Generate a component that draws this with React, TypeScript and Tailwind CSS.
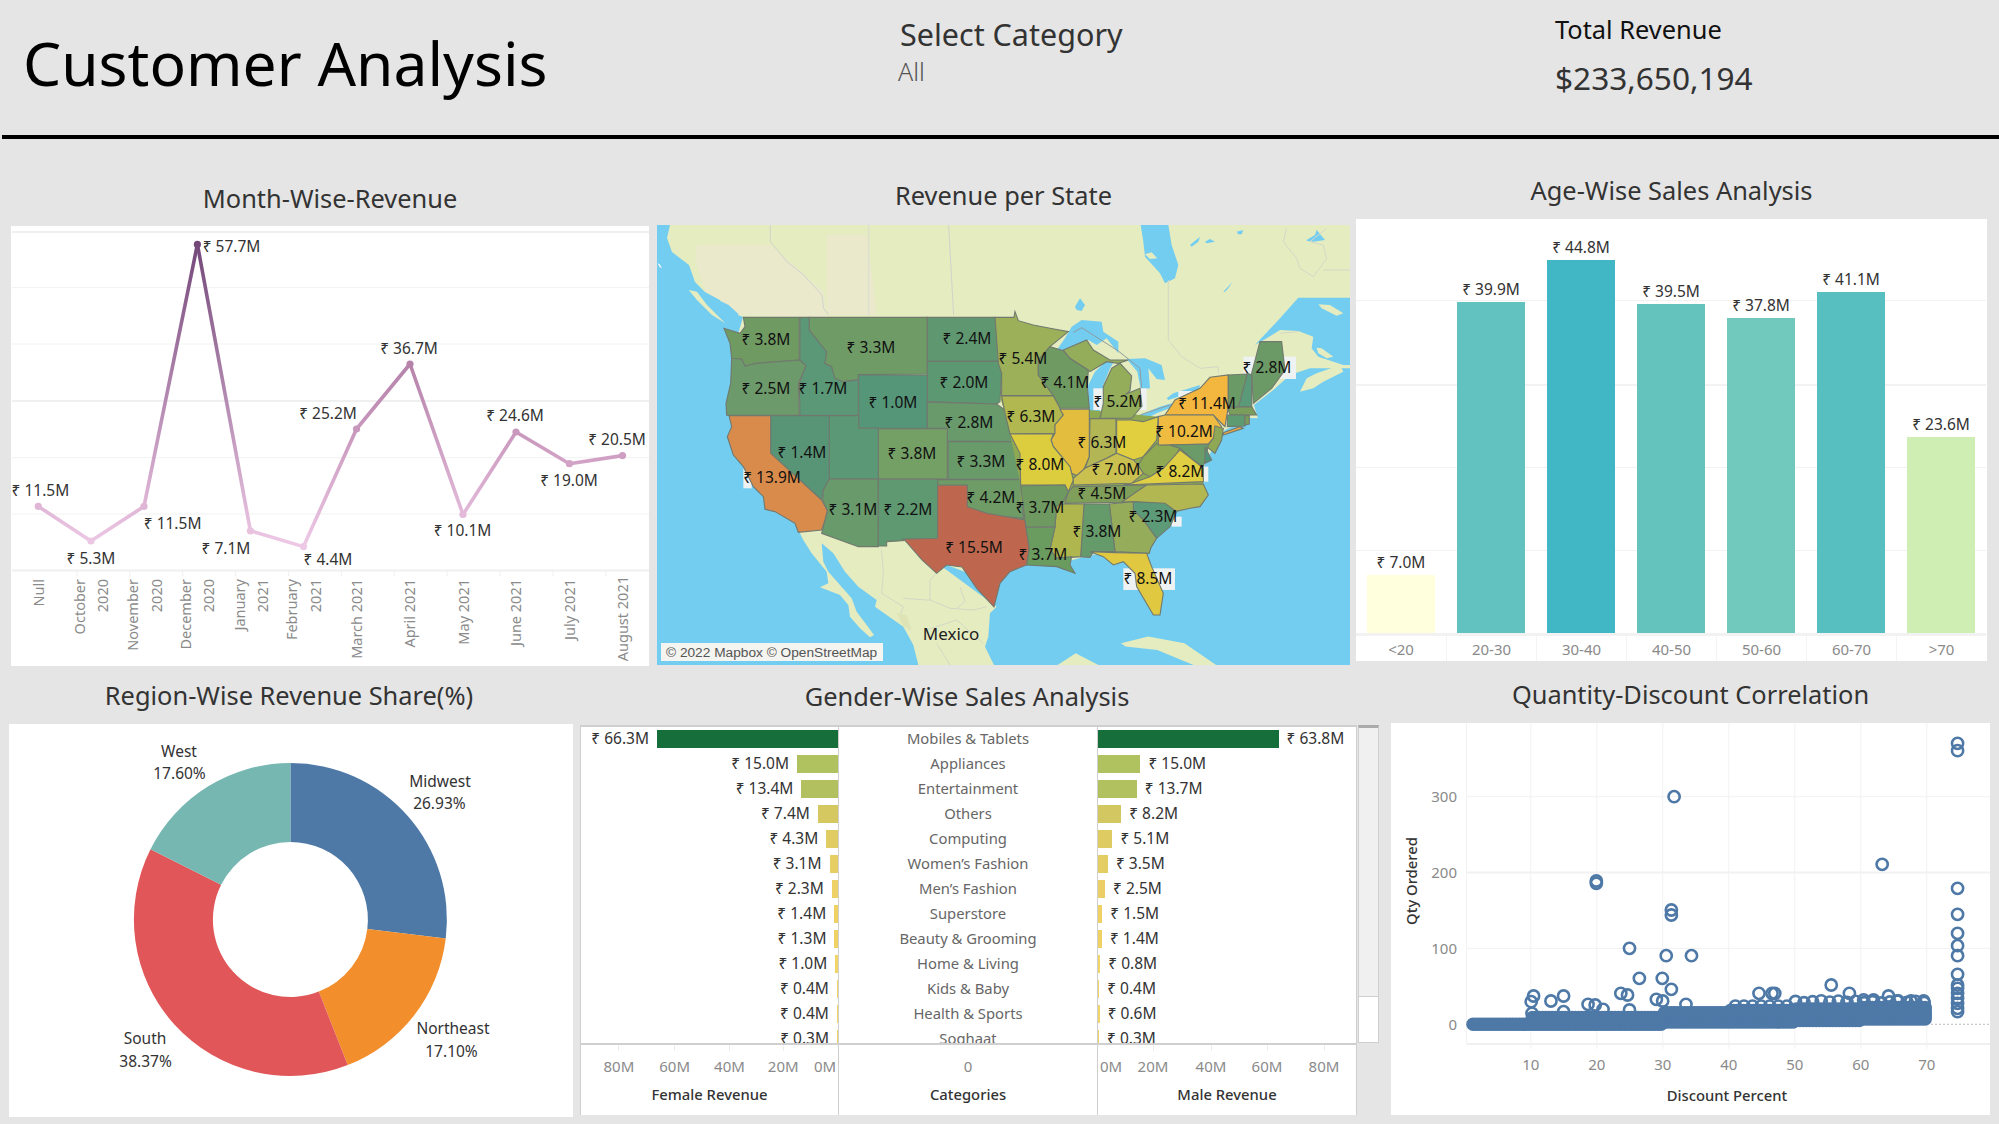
// App.tsx - Customer Analysis dashboard
const FONT = "font-['Noto_Sans',sans-serif]";

// ---------- line chart ----------
const months = [
  { x: 38.3, y: 506.4, v: 11.5, label: "₹ 11.5M", lx: 40.4, ly: 490.6 },
  { x: 90.9, y: 541, v: 5.3, label: "₹ 5.3M", lx: 91, ly: 558.5 },
  { x: 144, y: 506.4, v: 11.5, label: "₹ 11.5M", lx: 172.6, ly: 523.5 },
  { x: 197.4, y: 244.4, v: 57.7, label: "₹ 57.7M", lx: 231.5, ly: 246.5 },
  { x: 250.4, y: 530.8, v: 7.1, label: "₹ 7.1M", lx: 226, ly: 548.7 },
  { x: 303.5, y: 546.6, v: 4.4, label: "₹ 4.4M", lx: 328, ly: 560 },
  { x: 356.5, y: 429, v: 25.2, label: "₹ 25.2M", lx: 328, ly: 414 },
  { x: 410, y: 364, v: 36.7, label: "₹ 36.7M", lx: 409, ly: 349 },
  { x: 463, y: 514.5, v: 10.1, label: "₹ 10.1M", lx: 462.5, ly: 531 },
  { x: 516, y: 432, v: 24.6, label: "₹ 24.6M", lx: 515, ly: 416 },
  { x: 569.4, y: 463.7, v: 19.0, label: "₹ 19.0M", lx: 569, ly: 481 },
  { x: 622.5, y: 455.6, v: 20.5, label: "₹ 20.5M", lx: 617, ly: 440 },
];

const axisMonths = [
  { x: 39, text: "Null" },
  { x: 80, text: "October" },
  { x: 103, text: "2020" },
  { x: 133, text: "November" },
  { x: 157, text: "2020" },
  { x: 186, text: "December" },
  { x: 209, text: "2020" },
  { x: 240, text: "January" },
  { x: 263, text: "2021" },
  { x: 292, text: "February" },
  { x: 316, text: "2021" },
  { x: 357, text: "March 2021" },
  { x: 410, text: "April 2021" },
  { x: 464, text: "May 2021" },
  { x: 516, text: "June 2021" },
  { x: 570, text: "July 2021" },
  { x: 623, text: "August 2021" },
];

const lineStops: [number, number[]][] = [
  [4.4, [238, 201, 230]],
  [20, [208, 160, 196]],
  [37, [182, 129, 170]],
  [57.7, [116, 73, 122]],
];

function lineColor(v: number) {
  for (let i = 0; i < lineStops.length - 1; i++) {
    const [a, ca] = lineStops[i];
    const [b, cb] = lineStops[i + 1];
    if (v <= b) {
      const t = Math.max(0, (v - a) / (b - a));
      return `rgb(${ca.map((c, k) => Math.round(c + (cb[k] - c) * t)).join(",")})`;
    }
  }
  return "rgb(116,73,122)";
}

function LineChart() {
  return (
    <svg viewBox="11 226 638 440" className="block w-[638px] h-[440px]">
      <defs>
        {months.slice(1).map((m, i) => (
          <linearGradient
            key={i}
            id={`seg${i}`}
            gradientUnits="userSpaceOnUse"
            x1={months[i].x}
            y1={months[i].y}
            x2={m.x}
            y2={m.y + 0.01}
          >
            <stop offset="0" stopColor={lineColor(months[i].v)} />
            <stop offset="1" stopColor={lineColor(m.v)} />
          </linearGradient>
        ))}
      </defs>
      {[287.6, 344, 457.7, 514].map((y) => (
        <line key={y} x1="12" x2="649" y1={y} y2={y} stroke="#f2f2f2" />
      ))}
      {[232, 401, 570.5].map((y) => (
        <line key={y} x1="12" x2="649" y1={y} y2={y} stroke="#f0f0f0" strokeWidth="2" />
      ))}
      {months.map((m, i) => (
        <line
          key={i}
          x1={12 + 52.9 * i + 12}
          x2={12 + 52.9 * i + 12}
          y1="571"
          y2="576"
          stroke={i === 0 ? "none" : "#f0f0f0"}
        />
      ))}
      {months.slice(1).map((m, i) => (
        <line
          key={i}
          x1={months[i].x}
          y1={months[i].y}
          x2={m.x}
          y2={m.y + 0.01}
          stroke={`url(#seg${i})`}
          strokeWidth="3.6"
          strokeLinecap="round"
        />
      ))}
      {months.map((m, i) => (
        <circle key={i} cx={m.x} cy={m.y} r="3.6" fill={lineColor(m.v)} />
      ))}
      {months.map((m, i) => (
        <text key={i} x={m.lx} y={m.ly} dy=".35em" textAnchor="middle" fontSize="15.5" fill="#333">
          {m.label}
        </text>
      ))}
      {axisMonths.map((a) => (
        <text
          key={a.x}
          transform={`translate(${a.x} ${a.x === 623 ? 576 : 579}) rotate(-90)`}
          dy=".35em"
          textAnchor="end"
          fontSize="14.5"
          fill="#8a8a8a"
        >
          {a.text}
        </text>
      ))}
    </svg>
  );
}

// ---------- map ----------
const westStates = [
  ["#6f9a62", "100,52 268,52 268,180 140,190 105,198 95,178 65,175 60,130 42,85 90,100 105,80"],
  ["#6c9a6a", "65,175 95,178 105,198 140,190 268,180 288,197 265,250 268,346 50,346 48,310 62,250"],
  ["#5a9878", "270,52 298,52 298,90 350,155 345,190 365,200 375,235 400,245 445,240 445,346 270,346 268,250 288,197 270,180"],
  ["#6f9c66", "298,52 652,52 652,222 445,224 445,238 400,245 375,235 365,200 345,190 350,155 298,90"],
  ["#5f9870", "652,52 855,52 868,184 652,184"],
  ["#5c9872", "652,184 868,184 875,220 870,305 860,312 652,305"],
  ["#559679", "446,225 652,225 652,385 446,385"],
  ["#689a6c", "652,307 860,312 885,330 900,400 915,425 712,423 712,385 652,385"],
  ["#74a066", "505,386 712,386 712,537 505,537"],
  ["#689a6a", "714,425 918,425 932,470 935,538 714,537"],
  ["#6f9c66", "683,539 935,539 940,655 880,650 830,640 790,630 772,620 772,556 683,556"],
  ["#5b9875", "358,347 446,347 446,385 505,385 505,537 358,537"],
  ["#589577", "182,347 358,347 358,537 340,570 335,600 182,460"],
  ["#689a6b", "358,538 505,538 505,740 445,740 335,700 345,660 352,632 338,600 340,570"],
  ["#5f9971", "505,538 683,538 683,715 578,718 582,722 530,725 530,738 505,738"],
  ["#d98b4c", "57,347 182,347 182,460 335,600 352,632 345,660 335,690 265,697 255,670 195,635 165,628 160,590 130,560 100,500 70,465 52,410 65,380"],
  ["#bf674e", "683,556 772,556 772,620 830,640 945,660 958,745 950,795 900,815 870,850 852,921 800,865 756,801 710,795 680,820 636,780 582,718 683,715"],
];

const eastStates = [
  ["#9cb05a", "15,52 72,52 75,35 85,62 130,75 180,85 235,95 180,140 145,180 145,225 195,287 35,287 35,220 25,190"],
  ["#6f9a62", "145,180 180,140 220,152 240,175 295,210 292,260 298,325 210,325 190,287 145,225"],
  ["#93ad5b", "220,150 290,120 310,150 360,180 415,180 385,190 350,185 300,215 295,210 240,175"],
  ["#93ad5b", "365,205 390,190 425,228 420,272 407,283 450,265 456,318 425,355 330,355 340,310 340,260"],
  ["#b0b84f", "35,288 190,288 210,325 220,345 195,375 195,400 60,402 45,340"],
  ["#e3bd3d", "210,328 298,328 298,470 285,500 270,530 245,520 240,500 190,440 183,420 195,400 195,375 220,345"],
  ["#b2b655", "300,356 378,356 378,460 350,475 285,505 298,470"],
  ["#e1cf40", "380,360 425,360 460,365 505,350 500,420 460,470 430,480 380,460"],
  ["#dccd3f", "60,402 190,402 183,420 190,440 240,500 250,540 235,575 225,555 92,555 90,460"],
  ["#c9c050", "285,505 350,475 380,460 430,480 445,495 460,520 425,550 250,555 250,535"],
  ["#8fa852", "445,495 460,470 500,430 510,435 540,435 570,445 555,470 520,505 480,530 460,520"],
  ["#e0cf42", "425,550 480,530 520,505 570,450 610,480 640,505 640,545 400,555"],
  ["#7f9f5a", "235,575 250,560 470,555 445,572 395,607 225,610"],
  ["#b3b752", "395,607 445,572 470,555 640,552 655,585 630,620 600,625 555,635 525,615 430,605"],
  ["#5d9a78", "430,605 525,610 560,635 540,680 500,715 460,660 430,630"],
  ["#95ad5b", "358,612 430,605 430,630 460,660 500,715 482,745 478,760 375,755"],
  ["#659a6a", "282,612 358,612 375,755 310,755 300,772 272,770"],
  ["#b0b64e", "200,612 282,612 272,770 200,775 180,748 195,680"],
  ["#6e9a62", "92,558 225,555 235,575 220,605 200,620 195,680 108,682"],
  ["#6a9b5f", "108,682 195,682 180,748 200,775 245,770 240,795 255,820 200,800 110,795 118,745"],
  ["#e0c840", "300,755 375,758 470,760 485,800 520,880 510,945 490,945 440,860 435,820 400,785 370,795 340,770"],
  ["#f3b63e", "525,345 555,300 630,265 660,232 715,225 715,320 705,380 700,375 670,345"],
  ["#efbb41", "505,350 525,345 670,345 695,380 670,415 655,432 505,435"],
  ["#8ea855", "675,378 700,385 695,420 675,460 650,440 670,415"],
  ["#6a9b68", "540,435 655,432 650,460 640,500 610,480 570,445"],
  ["#4f9378", "645,440 665,480 645,490"],
  ["#5a9a78", "745,322 772,220 785,225 785,320"],
  ["#6a9a66", "715,225 772,222 745,322 715,320"],
  ["#6c9a66", "785,220 810,125 875,125 885,210 845,265 790,310"],
  ["#7a9d5c", "712,322 785,320 800,345 720,345"],
  ["#5f9b70", "712,345 765,345 765,378 712,380"],
  ["#7a9d5c", "765,347 778,347 778,372 765,375"],
  ["#f0a93f", "700,398 750,380 760,385 700,405"],
];

const mapLabels: [string, number, number][] = [
  ["₹ 3.8M", 766, 340], ["₹ 3.3M", 871, 348], ["₹ 2.4M", 967, 339], ["₹ 2.5M", 766, 389],
  ["₹ 1.7M", 823, 389], ["₹ 1.0M", 893, 403], ["₹ 2.0M", 964, 383], ["₹ 2.8M", 969, 423],
  ["₹ 3.8M", 912, 454], ["₹ 3.3M", 981, 462], ["₹ 1.4M", 802, 453], ["₹ 13.9M", 772, 478],
  ["₹ 3.1M", 853, 510], ["₹ 2.2M", 908, 510], ["₹ 15.5M", 974, 548], ["₹ 4.2M", 991, 498],
  ["₹ 5.4M", 1023, 359], ["₹ 4.1M", 1065, 383], ["₹ 5.2M", 1118, 402], ["₹ 11.4M", 1207, 404],
  ["₹ 6.3M", 1031, 417], ["₹ 6.3M", 1102, 443], ["₹ 10.2M", 1184, 432], ["₹ 8.0M", 1040, 465],
  ["₹ 7.0M", 1116, 470], ["₹ 8.2M", 1180, 472], ["₹ 4.5M", 1102, 494], ["₹ 3.7M", 1040, 508],
  ["₹ 2.3M", 1153, 517], ["₹ 3.8M", 1097, 532], ["₹ 3.7M", 1043, 555], ["₹ 8.5M", 1148, 579],
  ["₹ 2.8M", 1267, 368],
];

const WATER = "#73cdf0";
const LAND = "#e5ecc0";

function UsMap() {
  return (
    <svg viewBox="657 225 693 440" className="block w-[693px] h-[440px]">
      <rect x="657" y="225" width="693" height="440" fill={WATER} />
      {/* main land mass, the part under the states is hidden by them */}
      <polygon
        fill={LAND}
        points="670,225 1350,225 1350,420 1250,418 1225,430 1215,445 1205,462 1201,490 1195,503 1172,512 1165,525 1155,537 1148,552 1120,553 1090,555 1062,563 1025,560 985,580 960,570 920,555 900,545 858,545 800,530 775,480 745,420 735,345 743,317 725,310 720,300 705,292 695,282 689,265 672,252 667,238"
      />
      {/* north west */}
      <g transform="translate(657 225) scale(0.3333)">
        <polygon fill="#eae9cc" points="120,60 340,60 500,200 510,275 240,270 190,225 145,200 115,110" />
        <polygon fill="#eae9cc" points="510,30 630,30 660,270 510,270" />
        <polygon fill={LAND} points="95,195 120,200 150,240 205,295 165,270 120,225" />
        <polygon fill={WATER} points="190,228 215,240 245,268 235,275 200,255" />
        <polygon fill="#ffffff" points="2,115 8,118 15,130 8,126" />
        <g fill="none" stroke="#cfd3cb" strokeWidth="3">
          <polyline points="340,0 340,50 390,110 440,150 495,210 500,250 515,270" />
          <polyline points="875,0 890,270" />
        </g>
        <polyline fill="none" stroke="#dfe0cd" strokeWidth="5" points="635,0 635,270" />
      </g>
      {/* Mexico */}
      <g transform="translate(770 530) scale(0.3333)">
        <polygon
          fill={LAND}
          points="85,0 400,25 680,230 660,250 655,320 645,350 672,405 445,405 430,345 400,290 315,230 320,210 265,170 225,125 190,70 155,40 160,95 175,125 210,165 245,205 260,245 290,285 312,315 300,322 270,295 240,260 235,225 210,195 150,172 175,160 170,125 125,70 100,30"
        />
        <g fill="none" stroke="#cfd4c6" strokeWidth="2.5">
          <polyline points="335,60 340,130 335,190 400,230 390,260 420,300" />
          <polyline points="500,130 480,150 480,210 540,235 610,240 650,230" />
          <polyline points="400,205 470,210 480,210" />
          <polyline points="470,300 560,270 640,340" />
          <polyline points="570,170 585,215 560,235" />
          <polyline points="500,340 540,405" />
        </g>
        <polygon fill="#dfe4b6" points="380,250 410,255 425,300 400,290" />
      </g>
      {/* islands to the south east */}
      <g transform="translate(650 170) scale(0.4529 0.3333)">
        <polygon fill={LAND} points="1040,1420 1100,1400 1180,1420 1250,1485 1200,1485 1120,1440 1050,1430" />
        <polygon fill={LAND} points="900,1485 940,1450 990,1485" />
      </g>
      {/* Canada, lakes, gulf */}
      <g transform="translate(1050 225) scale(0.3333)">
        <g fill={WATER}>
          <polygon points="272,0 355,0 365,60 385,120 375,160 345,175 330,145 285,95 280,50" />
          <polygon points="420,60 450,35 445,50 425,65" />
          <polygon points="465,50 480,42 495,50 470,55" />
          <polygon points="560,20 580,15 575,28 565,28" />
          <polygon points="770,45 795,30 800,15 825,45 790,50 772,48" />
          <polygon points="520,200 548,170 535,190 525,200" />
          <polygon points="75,245 90,220 105,240 95,258 80,255" />
          {/* gulf of st lawrence and the atlantic */}
          <polygon points="900,218 745,218 690,280 615,360 650,340 690,315 745,318 790,335 785,370 805,395 880,420 900,420" />
          <polygon points="900,430 780,430 720,450 670,495 612,540 625,585 900,585" />
          {/* great lakes */}
          <polygon points="65,305 95,285 155,290 160,320 205,350 205,385 170,340 140,360 115,345 90,355 55,375 20,375 45,340" />
          <polygon points="230,402 285,400 335,420 345,465 320,462 295,430 300,490 272,492 262,440" />
          <polygon points="165,412 195,405 180,430 160,480 150,535 150,575 125,585 110,540 115,480 135,440" />
          <polygon points="245,580 270,570 330,545 365,535 370,545 320,565 270,590" />
          <polygon points="350,520 370,505 450,480 445,500 385,515 355,525" />
        </g>
        <polygon fill={LAND} points="285,88 305,82 322,100 300,102" />
        <polygon fill={LAND} points="805,238 840,240 880,265 860,272 815,250" />
        <polygon fill={LAND} points="800,368 815,370 850,395 830,400 805,385" />
        <polygon fill={LAND} points="750,500 770,460 800,445 870,420 880,440 820,470 790,490" />
        <g fill="none" stroke="#d3d8c6" strokeWidth="3">
          <polyline points="355,165 355,345 395,395 450,430 505,425 505,445" />
          <polyline points="710,10 700,50 740,100 750,130 790,155 830,100 820,60 780,50 830,10" />
          <polyline points="820,135 900,135" />
          <polyline points="690,325 745,320" />
        </g>
        <polyline fill="none" stroke="#8f9ba0" strokeWidth="3" points="70,322 95,308 205,378 270,430 275,490" />
        <polyline fill="none" stroke="#8f9ba0" strokeWidth="3" points="250,580 275,568 360,540" />
        <g fill="#eef2f2">
          <rect x="130" y="490" width="28" height="65" />
          <rect x="262" y="490" width="28" height="65" />
          <rect x="580" y="395" width="158" height="67" />
          <rect x="385" y="498" width="65" height="20" />
        </g>
      </g>
      {/* label halos on the water */}
      <g transform="translate(990 300) scale(0.3333)" fill="#eef2f2">
        <rect x="400" y="805" width="155" height="65" />
        <rect x="545" y="650" width="30" height="30" />
        <rect x="630" y="500" width="25" height="45" />
      </g>
      <g transform="translate(710 300) scale(0.3333)">
        <rect x="100" y="505" width="25" height="60" fill="#eef2f2" />
        {/* seam between the two halves of the country */}
        <polygon fill="#689a6a" points="880,420 945,420 945,660 880,650" />
        {westStates.map(([fill, pts], i) => (
          <polygon key={i} fill={fill} points={pts} stroke="#71796f" strokeWidth="1.1" vectorEffect="non-scaling-stroke" />
        ))}
      </g>
      <g transform="translate(990 300) scale(0.3333)">
        <polygon
          fill="#8fa852"
          points="30,290 45,340 60,402 92,555 92,610 200,612 225,610 400,607 525,610 640,550 640,505 640,440 670,415 505,350 298,330 210,328 190,288"
        />
        {eastStates.map(([fill, pts], i) => (
          <polygon key={i} fill={fill} points={pts} stroke="#71796f" strokeWidth="1.1" vectorEffect="non-scaling-stroke" />
        ))}
      </g>
      {mapLabels.map(([t, x, y], i) => (
        <text key={i} x={x} y={y} dy=".35em" textAnchor="middle" fontSize="15.5" fill="#111">
          {t}
        </text>
      ))}
      <text x="951" y="634" dy=".35em" textAnchor="middle" fontSize="17" fill="#222">
        Mexico
      </text>
      <rect x="661" y="643" width="222" height="18" fill="#f4f4f0" />
      <text x="666" y="657" fontSize="13.7" fill="#555" fontFamily="'Liberation Sans', sans-serif">
        © 2022 Mapbox © OpenStreetMap
      </text>
    </svg>
  );
}

// ---------- age bars ----------
const ageBars = [
  { name: "<20", value: "₹ 7.0M", h: 58, color: "bg-[#ffffdd]" },
  { name: "20-30", value: "₹ 39.9M", h: 331, color: "bg-[#61c2bf]" },
  { name: "30-40", value: "₹ 44.8M", h: 373, color: "bg-[#41b6c4]" },
  { name: "40-50", value: "₹ 39.5M", h: 329, color: "bg-[#65c3bd]" },
  { name: "50-60", value: "₹ 37.8M", h: 315, color: "bg-[#71c8bc]" },
  { name: "60-70", value: "₹ 41.1M", h: 341, color: "bg-[#57bfbf]" },
  { name: ">70", value: "₹ 23.6M", h: 196, color: "bg-[#cfeeb3]" },
];

function AgeChart() {
  return (
    <div className="w-[631px] h-[442px] bg-white">
      <div className="relative h-[414px] w-[630px]">
        <div className="absolute inset-x-0 top-[81px] h-px bg-[#f2f2f2]" />
        <div className="absolute inset-x-0 top-[165px] h-[2px] bg-[#f2f2f2]" />
        <div className="absolute inset-x-0 top-[248px] h-px bg-[#f2f2f2]" />
        <div className="absolute inset-x-0 top-[331px] h-px bg-[#f2f2f2]" />
        <div className="relative grid grid-cols-7 h-full">
          {ageBars.map((b) => (
            <div key={b.name} className="flex flex-col justify-end items-center">
              <span className="text-[15.5px] leading-5 mb-[3px] text-[#333]">{b.value}</span>
              <div className={`w-[68px] ${b.color}`} style={{ height: b.h }} />
            </div>
          ))}
        </div>
      </div>
      <div className="grid grid-cols-7 w-[630px] border-t-[3px] border-[#f2f2f2]">
        {ageBars.map((b, i) => (
          <div
            key={b.name}
            className={`h-[25px] text-center text-[15px] leading-[27px] text-[#8a8a8a] ${i > 0 ? "border-l border-[#f4f4f4]" : ""}`}
          >
            {b.name}
          </div>
        ))}
      </div>
    </div>
  );
}

// ---------- donut ----------
const regions = [
  { share: 26.93, color: "#4e79a7" },
  { share: 17.1, color: "#f28e2b" },
  { share: 38.37, color: "#e15759" },
  { share: 17.6, color: "#76b7b2" },
];

const regionLabels: [string, number, number][] = [
  ["West", 179, 752], ["17.60%", 179.5, 774],
  ["Midwest", 440, 782], ["26.93%", 439.4, 804],
  ["Northeast", 453, 1029], ["17.10%", 451.5, 1052],
  ["South", 145, 1039], ["38.37%", 145.6, 1062],
];

function arcPath(from: number, to: number) {
  const cx = 290.4, cy = 919.5, R = 156.5, r = 77.5;
  const a0 = (from / 100) * 2 * Math.PI - Math.PI / 2;
  const a1 = (to / 100) * 2 * Math.PI - Math.PI / 2;
  const large = to - from > 50 ? 1 : 0;
  const p = (rad: number, a: number) => `${(cx + rad * Math.cos(a)).toFixed(2)} ${(cy + rad * Math.sin(a)).toFixed(2)}`;
  return `M${p(R, a0)} A${R} ${R} 0 ${large} 1 ${p(R, a1)} L${p(r, a1)} A${r} ${r} 0 ${large} 0 ${p(r, a0)} Z`;
}

function Donut() {
  let acc = 0;
  return (
    <svg viewBox="9 724 564 393" className="block w-[564px] h-[393px] bg-white">
      {regions.map((r) => {
        const d = arcPath(acc, acc + r.share);
        acc += r.share;
        return <path key={r.color} d={d} fill={r.color} />;
      })}
      {regionLabels.map(([t, x, y]) => (
        <text key={t} x={x} y={y} dy=".35em" textAnchor="middle" fontSize="15.5" fill="#333">
          {t}
        </text>
      ))}
    </svg>
  );
}

// ---------- gender table ----------
const genderRows = [
  { cat: "Mobiles & Tablets", f: 66.3, m: 63.8, fc: "bg-[#166f3b]", mc: "bg-[#166f3b]" },
  { cat: "Appliances", f: 15.0, m: 15.0, fc: "bg-[#afc25f]", mc: "bg-[#afc25f]" },
  { cat: "Entertainment", f: 13.4, m: 13.7, fc: "bg-[#b3c060]", mc: "bg-[#b1c160]" },
  { cat: "Others", f: 7.4, m: 8.2, fc: "bg-[#d5c860]", mc: "bg-[#d2c760]" },
  { cat: "Computing", f: 4.3, m: 5.1, fc: "bg-[#e0cc62]", mc: "bg-[#decb62]" },
  { cat: "Women’s Fashion", f: 3.1, m: 3.5, fc: "bg-[#e6ce63]", mc: "bg-[#e4cd63]" },
  { cat: "Men’s Fashion", f: 2.3, m: 2.5, fc: "bg-[#edd066]", mc: "bg-[#ebcf66]" },
  { cat: "Superstore", f: 1.4, m: 1.5, fc: "bg-[#f0d264]", mc: "bg-[#f0d264]" },
  { cat: "Beauty & Grooming", f: 1.3, m: 1.4, fc: "bg-[#f0d264]", mc: "bg-[#f0d264]" },
  { cat: "Home & Living", f: 1.0, m: 0.8, fc: "bg-[#f2d568]", mc: "bg-[#f2d568]" },
  { cat: "Kids & Baby", f: 0.4, m: 0.4, fc: "bg-[#f2d568]", mc: "bg-[#f2d568]" },
  { cat: "Health & Sports", f: 0.4, m: 0.6, fc: "bg-[#f2d568]", mc: "bg-[#f2d568]" },
  { cat: "Soghaat", f: 0.3, m: 0.3, fc: "bg-[#f2d568]", mc: "bg-[#f2d568]" },
];

function AxisTick({ label, className, tick = true }: { label: string; className: string; tick?: boolean }) {
  return (
    <div className={`flex flex-col items-center ${className}`}>
      <i className={`block w-px h-[6px] ${tick ? "bg-[#ececec]" : "bg-transparent"}`} />
      <span className="mt-[5px] text-[15px] leading-5 text-[#8a8a8a]">{label}</span>
    </div>
  );
}

function GenderTable() {
  return (
    <div className="flex items-start w-[800px]">
      <div className="shrink-0 w-[777px] h-[390px] bg-white border-l border-r border-t-2 border-[#cfcfcf] box-border">
        <div className="h-[316px] overflow-hidden">
          <div className="-mt-[1px]">
            {genderRows.map((r) => (
              <div key={r.cat} className="grid grid-cols-[257px_260px_258px] h-[25px] items-center text-[15.5px]">
                <div className="flex justify-end items-center gap-[8px] text-[#333]">
                  <span>₹ {r.f.toFixed(1)}M</span>
                  <div className={`h-[18px] ${r.fc}`} style={{ width: Math.max(1, r.f * 2.73) }} />
                </div>
                <div className="h-[25px] border-x border-[#cfcfcf] text-center leading-[25px] text-[14.8px] text-[#666]">
                  {r.cat}
                </div>
                <div className="flex items-center gap-[8px] text-[#333]">
                  <div className={`h-[18px] ${r.mc}`} style={{ width: Math.max(1, r.m * 2.83) }} />
                  <span>₹ {r.m.toFixed(1)}M</span>
                </div>
              </div>
            ))}
          </div>
        </div>
        <div className="grid grid-cols-[257px_260px_258px] h-[72px] border-t-2 border-[#cfcfcf]">
          <div className="flex flex-col">
            <div className="h-[39px] flex">
              <AxisTick label="80M" className="w-[40px] ml-[18px]" />
              <AxisTick label="60M" className="w-[40px] ml-[16px]" />
              <AxisTick label="40M" className="w-[40px] ml-[15px]" />
              <AxisTick label="20M" className="w-[40px] ml-[14px]" />
              <AxisTick label="0M" tick={false} className="w-[26px] ml-[9px]" />
            </div>
            <div className="text-center text-[14.8px] leading-5 font-medium text-[#333]">Female Revenue</div>
          </div>
          <div className="flex flex-col border-x border-[#cfcfcf]">
            <div className="h-[39px] flex justify-center">
              <AxisTick label="0" tick={false} className="w-[40px]" />
            </div>
            <div className="text-center text-[14.8px] leading-5 font-medium text-[#333]">Categories</div>
          </div>
          <div className="flex flex-col">
            <div className="h-[39px] flex">
              <AxisTick label="0M" tick={false} className="w-[26px]" />
              <AxisTick label="20M" className="w-[40px] ml-[9px]" />
              <AxisTick label="40M" className="w-[40px] ml-[18px]" />
              <AxisTick label="60M" className="w-[40px] ml-[16px]" />
              <AxisTick label="80M" className="w-[40px] ml-[17px]" />
            </div>
            <div className="text-center text-[14.8px] leading-5 font-medium text-[#333]">Male Revenue</div>
          </div>
        </div>
      </div>
      {/* scroll bar */}
      <div className="shrink-0 ml-[1px] w-[21px] h-[318px] bg-white border border-[#cfcfcf] border-t-[3px] border-t-[#aaaaaa]">
        <div className="h-[269px] bg-[#f0f0f0] border-b border-[#cfcfcf]" />
      </div>
    </div>
  );
}

// ---------- scatter ----------
const outliers: [number, number][] = [
  [1463, 220], [1463, 242], [745, 380], [1272, 583], [1463, 655], [548, 633], [548, 640], [738, 720], [738, 735],
  [632, 835], [1463, 733], [1463, 790], [1463, 827], [1463, 857], [725, 857], [789, 857], [657, 925], [715, 925],
  [1463, 913], [738, 958], [1143, 945], [610, 970], [627, 975], [960, 970], [993, 970], [1000, 970], [1189, 970],
  [389, 978], [465, 978], [383, 995], [433, 993], [700, 988], [716, 993], [527, 1003], [545, 1005], [565, 1018],
  [775, 1003], [632, 1020], [1288, 978], [1463, 955], [1463, 970], [1463, 985], [1463, 1000], [1463, 1015],
  [1463, 1025], [1463, 945], [385, 1030], [465, 1025], [1377, 993], [1345, 993], [1310, 993], [1225, 990],
  [1250, 990],
];

const px = (d: number) => 1464.8 + 6.6 * d;
const py = (q: number) => 1024.3 - 0.7587 * q;

// the solid band along the bottom of the scatter
function bandPoints() {
  const pts: [number, number][] = [];
  const limits = (d: number): [number, number] => {
    if (d < 10) return [0, 2];
    if (d < 30) return [0, 11];
    if (d < 40) return [3, 15];
    if (d < 50) return [3, 19];
    if (d < 60) return [5, 22];
    return [7, 24];
  };
  for (let d = 1.25; d <= 69.8; d += 0.5) {
    const [lo, hi] = limits(d);
    for (let q = lo; q <= hi; q += 3) pts.push([px(d), py(q)]);
  }
  return pts;
}

// loose rings on top of the band at the high discounts
function fringePoints() {
  const pts: [number, number][] = [];
  for (let d = 41; d < 70; d += 1.3) pts.push([px(d), py(d < 50 ? 24 : 28 + (d % 3))]);
  return pts;
}

function Scatter() {
  const band = bandPoints();
  return (
    <svg viewBox="1391 723 599 392" className="block w-[599px] h-[392px] bg-white">
      {[10, 20, 30, 40, 50, 60, 70].map((d) => (
        <g key={d}>
          <line x1={px(d)} x2={px(d)} y1="723" y2="1044" stroke="#f2f2f2" />
          <line x1={px(d)} x2={px(d)} y1="1044" y2="1049" stroke="#f2f2f2" />
          <text x={px(d)} y="1065" dy=".35em" textAnchor="middle" fontSize="15" fill="#8a8a8a">
            {d}
          </text>
        </g>
      ))}
      <line x1="1466.5" x2="1466.5" y1="723" y2="1044" stroke="#f2f2f2" />
      <line x1="1466.5" x2="1990" y1="1044" y2="1044" stroke="#f0f0f0" strokeWidth="2" />
      {[100, 200, 300].map((q) => (
        <g key={q}>
          <line x1="1466.5" x2="1990" y1={py(q)} y2={py(q)} stroke="#f2f2f2" strokeWidth={q === 200 ? 2 : 1} />
          <text x="1457" y={py(q)} dy=".35em" textAnchor="end" fontSize="15" fill="#8a8a8a">
            {q}
          </text>
        </g>
      ))}
      <text x="1457" y={py(0)} dy=".35em" textAnchor="end" fontSize="15" fill="#8a8a8a">
        0
      </text>
      <line x1="1931" x2="1990" y1={py(0)} y2={py(0)} stroke="#bbbbbb" strokeDasharray="2 2" />
      {fringePoints().map(([x, y], i) => (
        <circle key={i} cx={x} cy={y} r="5.6" fill="none" stroke="#4e79a7" strokeWidth="2.6" />
      ))}
      {band.map(([x, y], i) => (
        <circle key={i} cx={x} cy={y} r="6.8" fill="#4e79a7" />
      ))}
      {outliers.map(([x, y], i) => (
        <circle
          key={i}
          cx={1380 + x / 2.533}
          cy={670 + y / 3}
          r="5.6"
          fill="none"
          stroke="#4e79a7"
          strokeWidth="2.6"
        />
      ))}
      <text x="1727" y="1096" dy=".35em" textAnchor="middle" fontSize="14.8" fontWeight="500" fill="#333">
        Discount Percent
      </text>
      <text
        transform="translate(1412 881) rotate(-90)"
        dy=".35em"
        textAnchor="middle"
        fontSize="14.8"
        fontWeight="500"
        fill="#333"
      >
        Qty Ordered
      </text>
    </svg>
  );
}

export default function App() {
  return (
    <div className={`w-[1999px] h-[1124px] overflow-hidden bg-[#e5e5e5] flex flex-col ${FONT}`}>
      {/* Header */}
      <header className="flex h-[135px]">
        <div className="w-[898px] pl-[23px] pt-[23px]">
          <h1 className="text-[60.5px] leading-[80px] text-black">Customer Analysis</h1>
        </div>
        <div className="w-[657px] pt-[14px] pl-[2px]">
          <p className="text-[30.5px] leading-[40px] text-[#333]">Select Category</p>
          <p className="mt-[1px] -ml-[2px] text-[25px] leading-[32px] font-light text-[#555]">All</p>
        </div>
        <div className="pt-[12px]">
          <p className="text-[25.4px] leading-[34px] text-[#111]">Total Revenue</p>
          <p className="mt-[11px] text-[31.6px] leading-[42px] text-[#333]">$233,650,194</p>
        </div>
      </header>
      <div className="h-[4px] ml-[2px] bg-black" />

      {/* First row */}
      <section className="flex items-start h-[531px]">
        <div className="ml-[11px] w-[638px]">
          <h2 className="mt-[43px] mb-[12px] text-center text-[25.4px] leading-[32px] text-[#333]">Month-Wise-Revenue</h2>
          <div className="bg-white">
            <LineChart />
          </div>
        </div>
        <div className="ml-[8px] w-[693px]">
          <h2 className="mt-[40px] mb-[14px] text-center text-[25.4px] leading-[32px] text-[#333]">Revenue per State</h2>
          <UsMap />
        </div>
        <div className="ml-[6px] w-[631px]">
          <h2 className="mt-[35px] mb-[13px] text-center text-[25.4px] leading-[32px] text-[#333]">Age-Wise Sales Analysis</h2>
          <AgeChart />
        </div>
      </section>

      {/* Second row */}
      <section className="flex items-start">
        <div className="ml-[9px] w-[564px]">
          <h2 className="mt-[9px] mb-[13px] -ml-[4px] text-center text-[25.4px] leading-[32px] text-[#333]">Region-Wise Revenue Share(%)</h2>
          <Donut />
        </div>
        <div className="ml-[7px] w-[777px]">
          <h2 className="mt-[10px] mb-[13px] -ml-[3px] text-center text-[25.4px] leading-[32px] text-[#333]">Gender-Wise Sales Analysis</h2>
          <GenderTable />
        </div>
        <div className="ml-[34px] w-[599px]">
          <h2 className="mt-[8px] mb-[13px] text-center text-[25.4px] leading-[32px] text-[#333]">Quantity-Discount Correlation</h2>
          <Scatter />
        </div>
      </section>
    </div>
  );
}
